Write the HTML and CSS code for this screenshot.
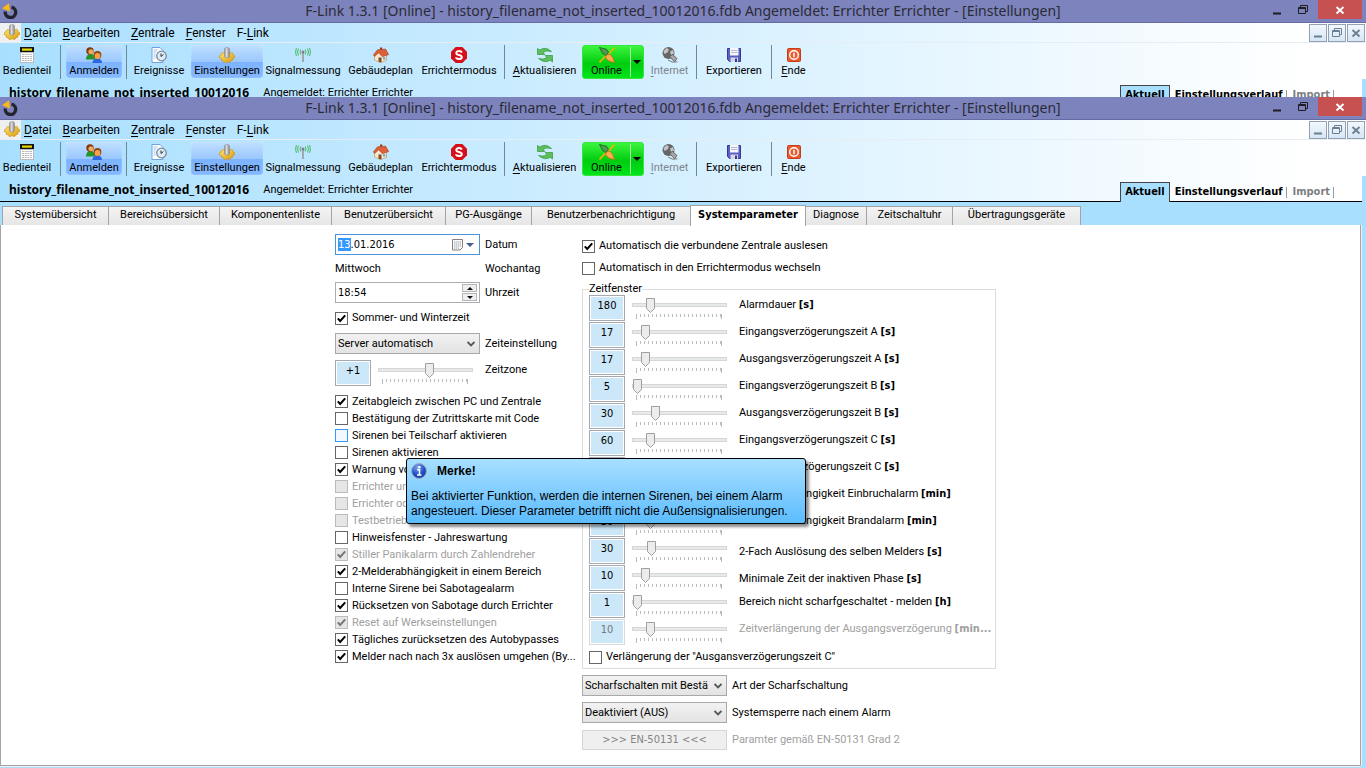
FILE: index.html
```html
<!DOCTYPE html>
<html lang="de">
<head>
<meta charset="utf-8">
<title>F-Link 1.3.1 [Online] - Einstellungen</title>
<link rel="stylesheet" href="styles.css">
</head>
<body>
<svg class="sprite" aria-hidden="true">
  <defs>
    <linearGradient id="gold" x1="0" y1="0" x2="1" y2="1"><stop offset="0" stop-color="#ffe56a"/><stop offset="1" stop-color="#d99a10"/></linearGradient>
    <linearGradient id="steel" x1="0" y1="0" x2="1" y2="0"><stop offset="0" stop-color="#8d8d8d"/><stop offset=".4" stop-color="#dcdcdc"/><stop offset="1" stop-color="#858585"/></linearGradient>
    <radialGradient id="blue" cx=".4" cy=".25" r=".8"><stop offset="0" stop-color="#7fa4f0"/><stop offset=".6" stop-color="#1f4fc4"/><stop offset="1" stop-color="#16379a"/></radialGradient>
  </defs>
  <symbol id="i-app" viewBox="0 0 16 16"><path d="M9.500 4.200A5.200 5.200 0 1 1 3.300 8.600" fill="none" stroke="#23242e" stroke-width="3.400"/><path d="M0 5.200 7 .200 8 8.400Z" fill="#fdb813"/></symbol>
  <symbol id="i-gear" viewBox="0 0 16 16"><path d="M2 7 3.500 5.500 5 6h6l1.500-.7L14 6.500l-.2 1.300 1.700.8v2.200l-1.800.6.1 1.800-2 .5-.8 1.600H9.200L8 14.400l-1.200 1.100H5.200l-.8-1.700-2-.4.100-1.800L.5 10.800V8.700l1.700-.8Z" fill="url(#gold)" stroke="#cc9418" stroke-width=".7"/><path d="M5.500 2Q5.500.5 8 .5T10.500 2V9.500Q10 11 8 11T5.500 9.500Z" fill="url(#steel)" stroke="#85858b" stroke-width=".5"/></symbol>
  <symbol id="i-keypad" viewBox="0 0 16 16"><rect x="1" y="0" width="14" height="5.500" fill="#141414"/><rect x="3" y="1.500" width="10" height="2.200" fill="#e8d800"/><rect x="1.500" y="5.500" width="13" height="10" fill="#fff" stroke="#b9b9b9"/><path d="M3 7.500h10M3 9.500h10M3 11.500h10M3 13.500h10" stroke="#b5b5b5" stroke-dasharray="2 .7"/></symbol>
  <symbol id="i-users" viewBox="0 0 16 16"><path d="M0 12.500q0-5.500 4.500-5.500T9 12.500Z" fill="#23962b"/><circle cx="4" cy="4" r="3.700" fill="#7c3c0a"/><circle cx="4.900" cy="4.700" r="2.500" fill="#f3a95f"/><path d="M6.500 16q0-4.500 4.700-4.500T16 16Z" fill="#2c67dd"/><circle cx="11.500" cy="8" r="3.900" fill="#8c470e"/><circle cx="11.500" cy="9" r="2.900" fill="#f6a04e"/></symbol>
  <symbol id="i-events" viewBox="0 0 16 16"><path d="M1 .5h8l3 3v12H1Z" fill="#fff" stroke="#6fa3de"/><path d="M2.500 3h4M2.500 5h3M2.500 7h2M2.500 9h2M2.500 11h2" stroke="#9dc4ee"/><circle cx="10.500" cy="9" r="4.800" fill="#dcecf8" stroke="#7a8a99" stroke-width="1.300"/><path d="M10 9.500V6.500M10 9.500l2.500-2" stroke="#333" fill="none"/></symbol>
  <symbol id="i-signal" viewBox="0 0 16 16"><path d="M8 6v9" stroke="#9a9a9a" stroke-width="1.600"/><circle cx="8" cy="5" r="1.500" fill="#8c6f9a"/><path d="M5.800 2.500q-1.600 2.500 0 5M10.200 2.500q1.600 2.500 0 5M3.500 1.500q-2 3.500 0 7M12.500 1.500q2 3.500 0 7M1.400 1q-1.600 4 0 8M14.600 1q1.600 4 0 8" fill="none" stroke="#3bb54a" stroke-width=".9"/></symbol>
  <symbol id="i-house" viewBox="0 0 16 16"><path d="M1.500 8.500v4.500L7 15.500l6.500-2V7.500L8 4Z" fill="#f7e9cf" stroke="#b98c58" stroke-width=".6"/><path d="M7 .500h2.200v4H7Z" fill="#8f3a1c"/><path d="M.3 8 4.500 2.800 12.500 2l3.200 5.500-6.200 2.300-4-4L1.800 9.500Z" fill="#dc6038" stroke="#9c3517" stroke-width=".5"/><path d="M5.500 10.500h3v5l-3-.8Z" fill="#7e4a22"/><path d="M10 10.300h2.300v2.200H10Z" fill="#5fa7dd"/></symbol>
  <symbol id="i-stop" viewBox="0 0 16 16"><path d="M4.700 0h6.600L16 4.700v6.600L11.300 16H4.700L0 11.300V4.700Z" fill="#d51018"/><path d="M10.800 5.600Q10.300 4 8 4T5.300 5.900Q5.300 7.400 8 8t2.800 2.200Q10.800 12 8 12T5.100 10.300" fill="none" stroke="#fff" stroke-width="2"/></symbol>
  <symbol id="i-refresh" viewBox="0 0 16 16"><path d="M.5 1.500 2.800 3Q8.500-1 14.500 4.500 9.500 3 6 5.300L7.800 7.500H.5Z" fill="#5fbd5c" stroke="#2c9a3a" stroke-width=".7"/><path d="M15.500 15 13.200 13.300Q7.500 16.800 1.500 11.500 6.500 13 10 10.700L8.200 8.500h7.300Z" fill="#5fbd5c" stroke="#2c9a3a" stroke-width=".7"/></symbol>
  <symbol id="i-plug" viewBox="0 0 16 16"><path d="M15.500.5 11 5.500 9.500 7M.5 15.500 6.500 9" fill="none" stroke="#f0b400" stroke-width="1.600"/><path d="M.5.5 7.500 2.300 9.500 5.500 6.500 8.300 3.500 6.500Z" fill="#4d9a4d" stroke="#1b5c26" stroke-width=".8"/><path d="M7.500 8 11 7.300l2.700 3.200 1.800 5-5.500-1.500-3.500-3Z" fill="#ffae4d" stroke="#d5661e" stroke-width=".8"/></symbol>
  <symbol id="i-globe" viewBox="0 0 16 16"><circle cx="6.500" cy="6" r="6" fill="#666"/><path d="M1.500 4 4.500 1 7 2.500 5.500 5.500 2.500 7ZM8 4.500l3-1.500 1 3.500L9 8Z" fill="#c4c4c4"/><path d="M7.500 9.500 10.500 7.500l4.500 4-2.500 3.300Z" fill="#a5a5a5" stroke="#555" stroke-width=".8"/><path d="M6 13q4 3.500 9.500 1.800" fill="none" stroke="#777"/></symbol>
  <symbol id="i-disk" viewBox="0 0 16 16"><path d="M1.500 1.500h13v13h-11l-2-2Z" fill="#5a5fc0" stroke="#343a94"/><rect x="4" y="1" width="8.500" height="7.500" fill="#f6f6fa"/><path d="M5 3.500h6.500M5 5.500h6.500" stroke="#b9bccd"/><rect x="4.500" y="10.500" width="7.500" height="4.500" fill="#d6d8ea"/><rect x="9" y="11.500" width="2" height="3.500" fill="#343a94"/></symbol>
  <symbol id="i-power" viewBox="0 0 16 16"><rect x="1.500" y="1.500" width="13" height="13" rx="1" fill="#ea5a2c" stroke="#c43d17"/><circle cx="8" cy="8" r="4.300" fill="none" stroke="#fff" stroke-width="1.400"/><path d="M8 5.700v4.600" stroke="#fff" stroke-width="1.500"/></symbol>
  <symbol id="i-info" viewBox="0 0 16 16"><circle cx="8" cy="8" r="7.400" fill="url(#blue)" stroke="#9fa6bd"/><circle cx="8.300" cy="4.200" r="1.300" fill="#fff"/><path d="M6.200 6.700h2.300v5M6 11.900h4.500" fill="none" stroke="#fff" stroke-width="1.500"/></symbol>
  <symbol id="i-min" viewBox="0 0 16 16"><path d="M4 11.500h8" stroke="currentColor" stroke-width="2"/></symbol>
  <symbol id="i-restore" viewBox="0 0 16 16"><path d="M3.500 5.500h7v6h-7ZM3 6.500h8M5.500 5V3.500h7v6H11" fill="none" stroke="currentColor"/></symbol>
  <symbol id="i-close" viewBox="0 0 16 16"><path d="m4.500 5 7 6.500m0-6.500-7 6.500" stroke="currentColor" stroke-width="1.800"/></symbol>
  <symbol id="i-calendar" viewBox="0 0 12 12"><path d="M.5.500h10v8l-2.500 2.500H.5Z" fill="#fafafa" stroke="#8a7f78"/><path d="M2 3h7.500M2 5h7.500M2 7h7.500M2 9h5" stroke="#9aa3b0" stroke-dasharray="1.300 .6"/></symbol>
  <symbol id="i-down" viewBox="0 0 8 4"><path d="M0 0h8L4 4Z" fill="currentColor"/></symbol>
  <symbol id="i-up" viewBox="0 0 8 4"><path d="M0 4h8L4 0Z" fill="currentColor"/></symbol>
</svg>

<section class="window window--back">
  <header class="titlebar">
    <svg class="icon titlebar__logo"><use href="#i-app"/></svg>
    <h1 class="titlebar__text">F-Link 1.3.1 [Online] - history_filename_not_inserted_10012016.fdb Angemeldet: Errichter Errichter - [Einstellungen]</h1>
    <div class="titlebar__controls">
      <button class="winbtn" aria-label="Minimieren"><svg class="icon"><use href="#i-min"/></svg></button>
      <button class="winbtn" aria-label="Wiederherstellen"><svg class="icon"><use href="#i-restore"/></svg></button>
      <button class="winbtn winbtn--close" aria-label="Schließen"><svg class="icon"><use href="#i-close"/></svg></button>
    </div>
  </header>
  <div class="chrome">
    <nav class="menubar">
      <span class="menubar__icon"><svg class="icon"><use href="#i-gear"/></svg></span>
      <a class="menubar__item" href="#"><u>D</u>atei</a>
      <a class="menubar__item" href="#"><u>B</u>earbeiten</a>
      <a class="menubar__item" href="#"><u>Z</u>entrale</a>
      <a class="menubar__item" href="#"><u>F</u>enster</a>
      <a class="menubar__item" href="#">F-<u>L</u>ink</a>
      <div class="menubar__controls">
        <button class="mdibtn" aria-label="Fenster minimieren"><svg class="icon"><use href="#i-min"/></svg></button>
        <button class="mdibtn" aria-label="Fenster wiederherstellen"><svg class="icon"><use href="#i-restore"/></svg></button>
        <button class="mdibtn" aria-label="Fenster schließen"><svg class="icon"><use href="#i-close"/></svg></button>
      </div>
    </nav>
    <div class="toolbar">
      <button class="tool"><svg class="icon"><use href="#i-keypad"/></svg><span>Bedienteil</span></button>
      <i class="sep"></i>
      <button class="tool tool--on"><svg class="icon"><use href="#i-users"/></svg><span>Anmelden</span></button>
      <i class="sep"></i>
      <button class="tool"><svg class="icon"><use href="#i-events"/></svg><span>Ereignisse</span></button>
      <button class="tool tool--on tool--inset"><svg class="icon"><use href="#i-gear"/></svg><span>Einstellungen</span></button>
      <button class="tool"><svg class="icon"><use href="#i-signal"/></svg><span>Signalmessung</span></button>
      <button class="tool"><svg class="icon"><use href="#i-house"/></svg><span>Gebäudeplan</span></button>
      <button class="tool"><svg class="icon"><use href="#i-stop"/></svg><span>Errichtermodus</span></button>
      <i class="sep"></i>
      <button class="tool"><svg class="icon"><use href="#i-refresh"/></svg><span><u>A</u>ktualisieren</span></button>
      <div class="split"><button class="tool tool--split"><svg class="icon"><use href="#i-plug"/></svg><span>Online</span></button><button class="split__more" aria-label="Verbindungsart"><svg class="arrow"><use href="#i-down"/></svg></button></div>
      <button class="tool" disabled><svg class="icon"><use href="#i-globe"/></svg><span><u>I</u>nternet</span></button>
      <i class="sep"></i>
      <button class="tool"><svg class="icon"><use href="#i-disk"/></svg><span>Exportieren</span></button>
      <i class="sep"></i>
      <button class="tool"><svg class="icon"><use href="#i-power"/></svg><span><u>E</u>nde</span></button>
    </div>
    <div class="infobar">
      <strong class="infobar__file">history_filename_not_inserted_10012016</strong>
      <span class="infobar__user">Angemeldet: Errichter Errichter</span>
      <nav class="views">
        <a class="view view--on" href="#">Aktuell</a>
        <a class="view" href="#">Einstellungsverlauf</a>
        <a class="view view--off" href="#">Import</a>
      </nav>
    </div>
  </div>
</section>

<section class="window window--front">
  <header class="titlebar">
    <svg class="icon titlebar__logo"><use href="#i-app"/></svg>
    <h1 class="titlebar__text">F-Link 1.3.1 [Online] - history_filename_not_inserted_10012016.fdb Angemeldet: Errichter Errichter - [Einstellungen]</h1>
    <div class="titlebar__controls">
      <button class="winbtn" aria-label="Minimieren"><svg class="icon"><use href="#i-min"/></svg></button>
      <button class="winbtn" aria-label="Wiederherstellen"><svg class="icon"><use href="#i-restore"/></svg></button>
      <button class="winbtn winbtn--close" aria-label="Schließen"><svg class="icon"><use href="#i-close"/></svg></button>
    </div>
  </header>
  <div class="chrome">
    <nav class="menubar">
      <span class="menubar__icon"><svg class="icon"><use href="#i-gear"/></svg></span>
      <a class="menubar__item" href="#"><u>D</u>atei</a>
      <a class="menubar__item" href="#"><u>B</u>earbeiten</a>
      <a class="menubar__item" href="#"><u>Z</u>entrale</a>
      <a class="menubar__item" href="#"><u>F</u>enster</a>
      <a class="menubar__item" href="#">F-<u>L</u>ink</a>
      <div class="menubar__controls">
        <button class="mdibtn" aria-label="Fenster minimieren"><svg class="icon"><use href="#i-min"/></svg></button>
        <button class="mdibtn" aria-label="Fenster wiederherstellen"><svg class="icon"><use href="#i-restore"/></svg></button>
        <button class="mdibtn" aria-label="Fenster schließen"><svg class="icon"><use href="#i-close"/></svg></button>
      </div>
    </nav>
    <div class="toolbar">
      <button class="tool"><svg class="icon"><use href="#i-keypad"/></svg><span>Bedienteil</span></button>
      <i class="sep"></i>
      <button class="tool tool--on"><svg class="icon"><use href="#i-users"/></svg><span>Anmelden</span></button>
      <i class="sep"></i>
      <button class="tool"><svg class="icon"><use href="#i-events"/></svg><span>Ereignisse</span></button>
      <button class="tool tool--on tool--inset"><svg class="icon"><use href="#i-gear"/></svg><span>Einstellungen</span></button>
      <button class="tool"><svg class="icon"><use href="#i-signal"/></svg><span>Signalmessung</span></button>
      <button class="tool"><svg class="icon"><use href="#i-house"/></svg><span>Gebäudeplan</span></button>
      <button class="tool"><svg class="icon"><use href="#i-stop"/></svg><span>Errichtermodus</span></button>
      <i class="sep"></i>
      <button class="tool"><svg class="icon"><use href="#i-refresh"/></svg><span><u>A</u>ktualisieren</span></button>
      <div class="split"><button class="tool tool--split"><svg class="icon"><use href="#i-plug"/></svg><span>Online</span></button><button class="split__more" aria-label="Verbindungsart"><svg class="arrow"><use href="#i-down"/></svg></button></div>
      <button class="tool" disabled><svg class="icon"><use href="#i-globe"/></svg><span><u>I</u>nternet</span></button>
      <i class="sep"></i>
      <button class="tool"><svg class="icon"><use href="#i-disk"/></svg><span>Exportieren</span></button>
      <i class="sep"></i>
      <button class="tool"><svg class="icon"><use href="#i-power"/></svg><span><u>E</u>nde</span></button>
    </div>
    <div class="infobar">
      <strong class="infobar__file">history_filename_not_inserted_10012016</strong>
      <span class="infobar__user">Angemeldet: Errichter Errichter</span>
      <nav class="views">
        <a class="view view--on" href="#">Aktuell</a>
        <a class="view" href="#">Einstellungsverlauf</a>
        <a class="view view--off" href="#">Import</a>
      </nav>
    </div>
  </div>

  <div class="tabs" role="tablist">
    <button class="tab" role="tab">Systemübersicht</button>
    <button class="tab" role="tab">Bereichsübersicht</button>
    <button class="tab" role="tab">Komponentenliste</button>
    <button class="tab" role="tab">Benutzerübersicht</button>
    <button class="tab" role="tab">PG-Ausgänge</button>
    <button class="tab" role="tab">Benutzerbenachrichtigung</button>
    <button class="tab tab--on" role="tab" aria-selected="true">Systemparameter</button>
    <button class="tab" role="tab">Diagnose</button>
    <button class="tab" role="tab">Zeitschaltuhr</button>
    <button class="tab" role="tab">Übertragungsgeräte</button>
  </div>

  <main class="panel">
    <form class="settings">
      <div class="left">
        <div class="clock">
          <div class="field field--focus"><span class="field__text"><mark>13</mark>.01.2016</span><button type="button" class="field__picker" aria-label="Kalender öffnen"><svg class="calendar"><use href="#i-calendar"/></svg><svg class="arrow"><use href="#i-down"/></svg></button></div>
          <span>Datum</span>
          <span>Mittwoch</span>
          <span>Wochantag</span>
          <div class="field"><input class="field__input" id="time" type="text" value="18:54"><div class="spin"><button type="button" class="spin__btn" aria-label="Später"><svg class="arrow"><use href="#i-up"/></svg></button><button type="button" class="spin__btn" aria-label="Früher"><svg class="arrow"><use href="#i-down"/></svg></button></div></div>
          <label for="time">Uhrzeit</label>
          <label class="check clock__wide"><input type="checkbox" checked>Sommer- und Winterzeit</label>
          <select class="select" id="source"><option>Server automatisch</option></select>
          <label for="source">Zeiteinstellung</label>
        </div>
        <div class="setting setting--zone"><output class="value">+1</output><span class="slider"><input id="zone" type="range" value="55"></span><label for="zone">Zeitzone</label></div>
        <div class="checks">
          <label class="check"><input type="checkbox" checked>Zeitabgleich zwischen PC und Zentrale</label>
          <label class="check"><input type="checkbox">Bestätigung der Zutrittskarte mit Code</label>
          <label class="check check--hot"><input type="checkbox">Sirenen bei Teilscharf aktivieren</label>
          <label class="check"><input type="checkbox">Sirenen aktivieren</label>
          <label class="check"><input type="checkbox" checked>Warnung vor</label>
          <label class="check"><input type="checkbox" disabled>Errichter und</label>
          <label class="check"><input type="checkbox" disabled>Errichter oder</label>
          <label class="check"><input type="checkbox" disabled>Testbetrieb</label>
          <label class="check"><input type="checkbox">Hinweisfenster - Jahreswartung</label>
          <label class="check"><input type="checkbox" checked disabled>Stiller Panikalarm durch Zahlendreher</label>
          <label class="check"><input type="checkbox" checked>2-Melderabhängigkeit in einem Bereich</label>
          <label class="check"><input type="checkbox">Interne Sirene bei Sabotagealarm</label>
          <label class="check"><input type="checkbox" checked>Rücksetzen von Sabotage durch Errichter</label>
          <label class="check"><input type="checkbox" checked disabled>Reset auf Werkseinstellungen</label>
          <label class="check"><input type="checkbox" checked>Tägliches zurücksetzen des Autobypasses</label>
          <label class="check"><input type="checkbox" checked>Melder nach nach 3x auslösen umgehen (By...</label>
        </div>
      </div>

      <div class="right">
        <label class="check check--tall"><input type="checkbox" checked>Automatisch die verbundene Zentrale auslesen</label>
        <label class="check check--tall"><input type="checkbox">Automatisch in den Errichtermodus wechseln</label>
        <fieldset class="group">
          <legend>Zeitfenster</legend>
          <div class="setting"><output class="value">180</output><span class="slider"><input id="t1" type="range" value="15"></span><label for="t1">Alarmdauer <b>[s]</b></label></div>
          <div class="setting"><output class="value">17</output><span class="slider"><input id="t2" type="range" value="10"></span><label for="t2">Eingangsverzögerungszeit A <b>[s]</b></label></div>
          <div class="setting"><output class="value">17</output><span class="slider"><input id="t3" type="range" value="10"></span><label for="t3">Ausgangsverzögerungszeit A <b>[s]</b></label></div>
          <div class="setting"><output class="value">5</output><span class="slider"><input id="t4" type="range" value="0"></span><label for="t4">Eingangsverzögerungszeit B <b>[s]</b></label></div>
          <div class="setting"><output class="value">30</output><span class="slider"><input id="t5" type="range" value="22"></span><label for="t5">Ausgangsverzögerungszeit B <b>[s]</b></label></div>
          <div class="setting"><output class="value">60</output><span class="slider"><input id="t6" type="range" value="15"></span><label for="t6">Eingangsverzögerungszeit C <b>[s]</b></label></div>
          <div class="setting"><output class="value">60</output><span class="slider"><input id="t7" type="range" value="15"></span><label for="t7">Ausgangsverzögerungszeit C <b>[s]</b></label></div>
          <div class="setting"><output class="value">30</output><span class="slider"><input id="t8" type="range" value="15"></span><label for="t8">2-Melderabhängigkeit Einbruchalarm <b>[min]</b></label></div>
          <div class="setting"><output class="value">30</output><span class="slider"><input id="t9" type="range" value="15"></span><label for="t9">2-Melderabhängigkeit Brandalarm <b>[min]</b></label></div>
          <div class="setting setting--mid"><output class="value">30</output><span class="slider"><input id="t10" type="range" value="17"></span><label for="t10">2-Fach Auslösung des selben Melders <b>[s]</b></label></div>
          <div class="setting setting--mid"><output class="value">10</output><span class="slider"><input id="t11" type="range" value="9"></span><label for="t11">Minimale Zeit der inaktiven Phase <b>[s]</b></label></div>
          <div class="setting"><output class="value">1</output><span class="slider"><input id="t12" type="range" value="0"></span><label for="t12">Bereich nicht scharfgeschaltet - melden <b>[h]</b></label></div>
          <div class="setting setting--off"><output class="value">10</output><span class="slider"><input id="t13" type="range" value="15" disabled></span><label for="t13">Zeitverlängerung der Ausgangsverzögerung <b>[min...</b></label></div>
          <label class="check check--tall"><input type="checkbox">Verlängerung der "Ausgansverzögerungszeit C"</label>
        </fieldset>
        <div class="modes">
          <select class="select" id="arming"><option>Scharfschalten mit Bestätigung</option></select>
          <label for="arming">Art der Scharfschaltung</label>
          <select class="select" id="lock"><option>Deaktiviert (AUS)</option></select>
          <label for="lock">Systemsperre nach einem Alarm</label>
          <button type="button" class="preset" id="preset" disabled>&gt;&gt;&gt; EN-50131 &lt;&lt;&lt;</button>
          <label class="modes__off" for="preset">Paramter gemäß EN-50131 Grad 2</label>
        </div>
      </div>
    </form>

    <aside class="tip" role="tooltip">
      <h2 class="tip__title"><svg class="icon"><use href="#i-info"/></svg>Merke!</h2>
      <p class="tip__text">Bei aktivierter Funktion, werden die internen Sirenen, bei einem Alarm<br>angesteuert. Dieser Parameter betrifft nicht die Außensignalisierungen.</p>
    </aside>
  </main>
</section>
</body>
</html>
```
FILE: styles.css
```css
* { box-sizing: border-box; }

:root {
  --sky: #a8dfff;
  --ui: Roboto, "Liberation Sans", sans-serif;
  --ui-bold: "DejaVu Sans Condensed", "DejaVu Sans", sans-serif;
}

body {
  margin: 0;
  min-height: 100vh;
  display: flex;
  flex-direction: column;
  background: var(--sky);
  color: #000;
  font: 11px/16px var(--ui);
}

button, input, select, output { font: inherit; color: inherit; }
button { padding: 0; border: 0; background: none; }
a { color: inherit; text-decoration: none; }
b { font-family: var(--ui-bold); }
u { text-underline-offset: 2px; }

.sprite { position: absolute; width: 0; height: 0; }
.icon { width: 16px; height: 16px; flex: none; display: block; }
.arrow { width: 8px; height: 4px; flex: none; display: block; }

/* Windows */
.window { display: flex; flex-direction: column; }
.window--back { height: 97px; overflow: hidden; }
.window--front { flex: 1; }

.titlebar {
  flex: none;
  height: 23px;
  display: grid;
  grid-template-columns: 102px 1fr 102px;
  align-items: center;
  background: #7d83bc;
  border-bottom: 1px solid #666ba4;
}
.titlebar__logo { margin-left: 2px; }
.titlebar__text {
  margin: 0;
  text-align: center;
  white-space: nowrap;
  font: 14px/22px "Noto Sans", sans-serif;
  color: #2b2b36;
}
.titlebar__controls { display: flex; justify-content: flex-end; align-self: start; padding-right: 4px; }
.winbtn { width: 26px; height: 19px; display: grid; place-items: center; color: #1d1d22; }
.winbtn--close { width: 44px; margin-left: 2px; background: #c75050; color: #fff; }

.chrome { background: linear-gradient(90deg, #a8dfff, #fff 96%); flex: none; }

.menubar {
  height: 20px;
  display: flex;
  align-items: center;
  gap: 11px;
  border-bottom: 1px solid #e6eef3;
  font-size: 12px;
}
.menubar__icon { width: 21px; height: 19px; padding: 1px 0 0 4px; margin-right: -8px; background: #f0f0f0; }
.menubar__controls { margin-left: auto; display: flex; gap: 1px; padding-right: 1px; }
.mdibtn {
  width: 18px;
  height: 18px;
  display: grid;
  place-items: center;
  border: 1px solid #93a1b2;
  background: linear-gradient(#f2f8fd, #d6e6f5);
  color: #6b7f92;
}

.toolbar {
  height: 36px;
  padding-top: 2px;
  display: grid;
  grid-template-columns: 54px 12px 56px 8px 58px 78px 74px 81px 76px 14px 67px 69px 45px 8px 68px 7px 37px;
}
.tool {
  height: 33px;
  padding-top: 2px;
  display: flex;
  flex-direction: column;
  align-items: center;
  gap: 1px;
  white-space: nowrap;
  line-height: 14px;
}
.tool:disabled { color: #80868c; }
.tool--on { border-radius: 3px; background: linear-gradient(#bfe0ff, #9cc8ff 50%, #7db3ff 52%, #85b8ff); box-shadow: inset 0 0 1px #fff; }
.tool--inset { margin: 0 3px; }
.sep { width: 1px; height: 34px; background: #6f8797; justify-self: center; }
.split {
  height: 34px;
  margin: 0 3px 0 4px;
  display: flex;
  border-radius: 3px;
  background: linear-gradient(#3cf53c, #00cc10 55%, #00e41a);
  border: 1px solid #35e63c;
}
.tool--split { flex: 1; padding-top: 1px; }
.split__more { width: 13px; margin: 1px 0; border-left: 1px solid #a5f5a5; display: grid; place-items: center; }

.infobar {
  height: 26px;
  margin-right: 4px;
  display: flex;
  align-items: center;
  gap: 14px;
  padding: 2px 0 0 9px;
  border-bottom: 1px solid #000;
  box-shadow: 4px 0 var(--sky);
}
.infobar__file { font: bold 12px/20px "Noto Sans", sans-serif; }
.infobar__user { line-height: 20px; }
.views { align-self: flex-end; margin: 0 28px -1px auto; display: flex; align-items: flex-end; font: bold 11px/18px var(--ui-bold); }
.view { padding: 0 4px 1px; background: linear-gradient(#999, #999) right 4px / 1px 11px no-repeat; }
.view--on {
  margin-right: 1px;
  padding: 0 4px 1px;
  border: 1px solid #444;
  border-bottom: 0;
  background: var(--sky);
}
.view--off { padding-left: 6px; color: #7b7f83; }

/* Tabs */
.tabs {
  flex: none;
  height: 23px;
  display: grid;
  grid-template-columns: 106px 111px 112px 114px 86px 159px 115px 61px 86px 128px;
  align-items: end;
  padding-left: 2px;
  background: var(--sky);
  z-index: 1;
}
.tab {
  height: 19px;
  padding-bottom: 2px;
  border: 1px solid #a3a3a8;
  border-width: 1px 1px 0;
  margin-right: -1px;
  background: linear-gradient(#f3f3f3, #e6e6e6);
  line-height: 16px;
  white-space: nowrap;
}
.tab--on {
  height: 21px;
  margin-bottom: -1px;
  background: #fff;
  font: bold 11px/16px var(--ui-bold);
}

/* Panel */
.panel {
  flex: 1;
  position: relative;
  margin: -1px 5px 2px 0;
  border: 1px solid #a3a3a8;
  box-shadow: 0 1px #f0f0f0, 1px 0 #f0f0f0;
  background: #fff;
  z-index: 0;
}
.settings { display: flex; gap: 7px; padding: 9px 0 14px 334px; }
.left { width: 240px; }
.right { width: 414px; padding-top: 1px; }

.clock {
  display: grid;
  grid-template-columns: 145px 1fr;
  grid-template-rows: 21px 27px 21px 30px 21px;
  column-gap: 5px;
  align-items: center;
}
.clock__wide { grid-column: 1 / -1; }

.field {
  height: 21px;
  display: flex;
  align-items: center;
  padding: 0 2px;
  border: 1px solid #abadb3;
  background: #fff;
  font: 11px/16px "DejaVu Sans Condensed", sans-serif;
}
.field--focus { border-color: #4a94dc; }
.field__text { flex: 1; }
.field mark { background: #3399ff; color: #fff; }
.field__picker { display: flex; align-items: center; gap: 2px; padding-right: 3px; color: #44618e; }
.calendar { width: 12px; height: 12px; }
.field__input { flex: 1; min-width: 0; padding: 0; border: 0; outline: 0; background: none; }
.spin { width: 15px; display: grid; gap: 1px; }
.spin__btn { height: 8px; display: grid; place-items: center; border: 1px solid #b5b5b5; background: #efefef; color: #111; }
.spin .arrow { width: 6px; height: 3px; }

.select {
  width: 145px;
  height: 21px;
  padding: 0 18px 0 2px;
  appearance: none;
  border: 1px solid #a9a9a9;
  border-radius: 0;
  background:
    url("data:image/svg+xml,%3Csvg xmlns='http://www.w3.org/2000/svg' viewBox='0 0 8 6'%3E%3Cpath d='M.5 1 4 4.500 7.500 1' fill='none' stroke='%23555' stroke-width='1.800'/%3E%3C/svg%3E") right 4px center / 8px 6px no-repeat,
    linear-gradient(#f2f2f2, #e3e3e3);
}

.check { height: 17px; display: flex; align-items: center; gap: 4px; white-space: nowrap; }
.check--tall { height: 22px; }
.check input {
  appearance: none;
  flex: none;
  width: 13px;
  height: 13px;
  margin: 0;
  border: 1px solid #666;
  background: #fff center / 11px 11px no-repeat;
}
.check input:checked { background-image: url("data:image/svg+xml,%3Csvg xmlns='http://www.w3.org/2000/svg' viewBox='0 0 11 11'%3E%3Cpath d='M1.800 5.300 4.200 8 9.200 2.300' fill='none' stroke='%23000' stroke-width='2'/%3E%3C/svg%3E"); }
.check input:disabled { border-color: #bcbcbc; background-color: #e6e6e6; }
.check input:disabled:checked { background-image: url("data:image/svg+xml,%3Csvg xmlns='http://www.w3.org/2000/svg' viewBox='0 0 11 11'%3E%3Cpath d='M1.800 5.300 4.200 8 9.200 2.300' fill='none' stroke='%23777' stroke-width='2'/%3E%3C/svg%3E"); }
.check:has(input:disabled) { color: #a0a0a0; }
.check--hot input { border-color: #3399ff; background-color: #f3f8ff; }

/* Value box, slider and caption */
.setting {
  height: 27px;
  display: grid;
  grid-template-columns: 36px 95px 1fr;
  column-gap: 7px;
}
.setting label { margin-left: 5px; line-height: 20px; white-space: nowrap; }
.setting--mid label { align-self: center; }
.setting--zone { margin: 6px 0; }
.value {
  height: 26px;
  border: 1px solid #a6a8b0;
  box-shadow: inset 0 0 0 1px #fff;
  background: #cce7f8;
  text-align: center;
  font: 11px/19px "DejaVu Sans Condensed", sans-serif;
}
.slider {
  height: 24px;
  background:
    linear-gradient(90deg, #b9b9b9 1px, transparent 1px 85px, #b9b9b9 85px) 4px 19px / 86px 5px no-repeat,
    repeating-linear-gradient(90deg, #bdbdbd 0 1px, transparent 1px 4px) 4px 19px / 86px 3px no-repeat;
}
.slider input { appearance: none; display: block; width: 100%; height: 19px; margin: 0; background: none; }
.slider input::-webkit-slider-runnable-track { height: 4px; border: 1px solid #d6d6d6; background: #e7eaea; }
.slider input::-webkit-slider-thumb {
  appearance: none;
  width: 9px;
  height: 15px;
  margin-top: -6px;
  background: url("data:image/svg+xml,%3Csvg xmlns='http://www.w3.org/2000/svg' viewBox='0 0 9 15'%3E%3Cpath d='M.5.500h8v10L4.500 14.500.5 10.500Z' fill='%23ececec' stroke='%239f9f9f'/%3E%3C/svg%3E") center / 9px 15px no-repeat;
}
.setting--off { color: #a0a0a0; }
.setting--off .value { border-color: #dadada; color: #777; }

.group { min-width: 0; margin: 4px 0 6px; padding: 0 6px; border: 1px solid #dcdcdc; }
.group legend { padding: 0; line-height: 12px; }

.modes {
  display: grid;
  grid-template-columns: 145px 1fr;
  grid-auto-rows: 21px;
  gap: 6px 5px;
  align-items: center;
}
.modes__off { color: #a0a0a0; }
.preset { height: 20px; border: 1px solid #d5d5d5; background: #efefef; color: #838383; font-family: "DejaVu Sans Condensed", sans-serif; }

.tip {
  position: absolute;
  left: 405px;
  top: 233px;
  width: 400px;
  padding: 4px 4px 4px;
  border: 1px solid #000;
  border-radius: 3px;
  background: linear-gradient(#a8dfff, #5cbcff);
  box-shadow: 3px 3px 3px rgba(0, 0, 0, .45);
  font: 12px/15px "Liberation Sans", Arial, sans-serif;
}
.tip__title { margin: 0 0 10px; display: flex; align-items: center; gap: 10px; font-size: 12px; line-height: 16px; }
.tip__text { margin: 0; white-space: nowrap; }
```
